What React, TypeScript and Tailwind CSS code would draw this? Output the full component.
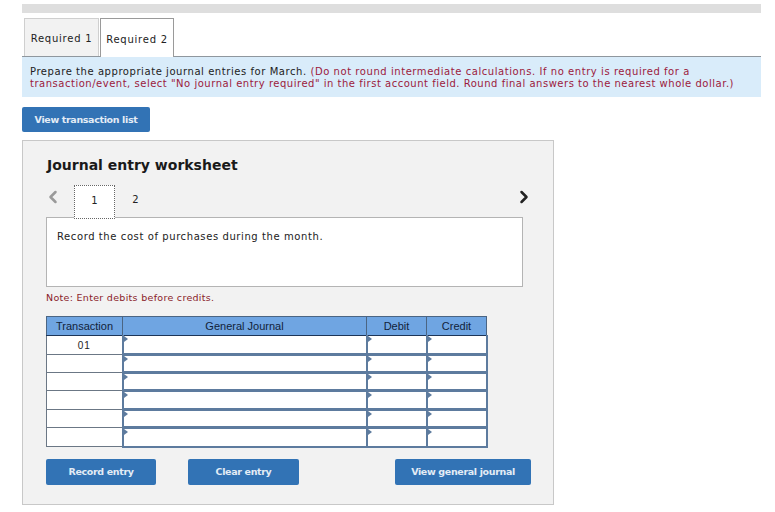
import React from "react";
import { ChevronLeft, ChevronRight } from "lucide-react";

const verdana = "font-['DejaVu_Sans',sans-serif]";

const Row = ({ label, tall, last }: { label?: string; tall?: boolean; last?: boolean }) => (
  <tr className={tall ? "h-[19px]" : "h-[18px]"}>
    <td className="border border-[#6b7785] bg-white p-0 text-center align-middle text-[10px] tracking-[1px] text-[#222]">
      {label}
    </td>
    {[0, 1, 2].map((i) => (
      <td
        key={i}
        className={`relative border-x-2 border-[#5d7b9e] bg-white p-0 ${last ? "border-b-2" : "border-b-[3px]"}`}
      >
        <span className="absolute left-0 top-0 h-0 w-0 border-y-[3px] border-l-[4px] border-y-transparent border-l-[#5d7b9e]" />
      </td>
    ))}
  </tr>
);

const BlueButton = ({ children, className }: { children: React.ReactNode; className: string }) => (
  <button
    className={`flex items-center justify-center rounded-[2px] bg-[#3273b5] text-[9.5px] font-bold tracking-[-0.35px] text-[#e3ecf5] ${className}`}
  >
    {children}
  </button>
);

export default function App() {
  return (
    <div className={`h-[512px] w-[775px] overflow-hidden bg-white pl-[22px] pr-[14px] pt-[4px] text-[#222] ${verdana}`}>
      <div className="h-[9px] bg-[#dedede]" />

      {/* tabs */}
      <div className="mt-[5px] flex h-[39px] gap-px border-b border-[#8f979e] pl-[2px]">
        <div className="flex h-[38px] w-[75px] items-center justify-center border border-b-0 border-[#cfcfcf] bg-[#f2f2f2] pt-[2px] text-[10px] tracking-[0.75px]">
          Required 1
        </div>
        <div className="flex h-[39px] w-[74px] items-center justify-center border border-b-0 border-[#9a9a9a] bg-white pt-[2px] text-[10px] tracking-[0.75px]">
          Required 2
        </div>
      </div>

      {/* instructions */}
      <div className="h-[40px] bg-[#d9ecfa] px-[8px] pt-[9px] text-[10px] leading-[12px]">
        <p className="tracking-[0.56px]">
          Prepare the appropriate journal entries for March.{" "}
          <span className="text-[#9c1a3c]">
            (Do not round intermediate calculations. If no entry is required for a
          </span>
        </p>
        <p className="tracking-[0.516px] text-[#9c1a3c]">
          transaction/event, select "No journal entry required" in the first account field. Round final answers to the
          nearest whole dollar.)
        </p>
      </div>

      <BlueButton className="mt-[10px] h-[25px] w-[128px] pt-px">View transaction list</BlueButton>

      {/* worksheet */}
      <div className="mt-[8px] h-[365px] w-[532px] border border-[#c8c8c8] bg-[#f2f2f2] px-[23px] pt-[14px]">
        <h2 className="pl-px text-[14px] font-bold leading-[20px] text-[#1a1a1a]">Journal entry worksheet</h2>

        <div className="relative mt-[10px] flex h-[32px] items-start">
          <ChevronLeft className="ml-[-3px] mt-[2px] h-[20px] w-[20px] text-[#9a9a9a]" strokeWidth={3} />
          <div className="relative z-10 ml-[11px] flex h-[34px] w-[41px] items-center justify-center border border-dotted border-[#666] bg-white pb-[4px] text-[10px]">
            1
          </div>
          <div className="flex h-[32px] w-[41px] items-center justify-center pb-[4px] text-[10px]">2</div>
          <ChevronRight className="absolute right-[-4px] top-[2px] h-[20px] w-[20px] text-[#222]" strokeWidth={3} />
        </div>

        <div className="h-[70px] w-[477px] border border-[#b4b4b4] bg-white px-[10px] pt-[12px] text-[10px] leading-[14px] tracking-[0.59px]">
          Record the cost of purchases during the month.
        </div>

        <p className="mt-[4px] text-[9.5px] leading-[14px] tracking-[0.3px] text-[#8a1c2a]">Note: Enter debits before credits.</p>

        {/* table */}
        <table className="mt-[11px] w-[440px] table-fixed border-collapse font-['Liberation_Sans',sans-serif]">
          <colgroup>
            <col className="w-[76px]" />
            <col className="w-[244px]" />
            <col className="w-[60px]" />
            <col className="w-[60px]" />
          </colgroup>
          <thead>
            <tr className="h-[19px] bg-[#6fa5e2] text-[11px] text-[#12233a]">
              {["Transaction", "General Journal", "Debit", "Credit"].map((h) => (
                <th key={h} className="border border-[#4b6583] border-b-[#1d3557] p-0 font-normal">
                  {h}
                </th>
              ))}
            </tr>
          </thead>
          <tbody>
            <Row label="01" tall />
            <Row />
            <Row />
            <Row tall />
            <Row />
            <Row tall last />
          </tbody>
        </table>

        <div className="mt-[11px] flex h-[26px] w-[485px]">
          <BlueButton className="w-[110px] pt-[2px]">Record entry</BlueButton>
          <BlueButton className="ml-[32px] w-[111px] pt-[2px]">Clear entry</BlueButton>
          <BlueButton className="ml-auto w-[136px] pt-[2px]">View general journal</BlueButton>
        </div>
      </div>
    </div>
  );
}
